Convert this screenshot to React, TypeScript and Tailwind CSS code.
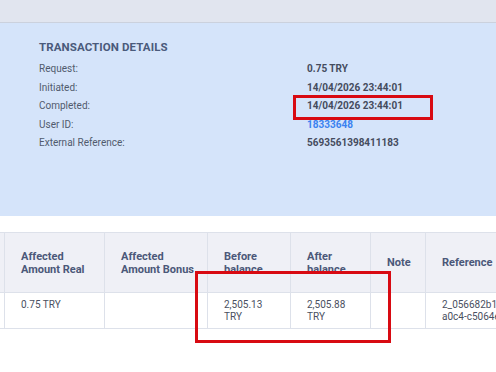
const details = [
  { label: "Request:", value: "0.75 TRY" },
  { label: "Initiated:", value: "14/04/2026 23:44:01" },
  { label: "Completed:", value: "14/04/2026 23:44:01" },
  { label: "User ID:", value: "18333648", link: true },
  { label: "External Reference:", value: "5693561398411183" },
];

const columns = [
  { w: "w-[5px] pl-0", head: [] as string[], cell: [] as string[] },
  { w: "w-[100px] pl-[16px]", head: ["Affected", "Amount Real"], cell: ["0.75 TRY"] },
  { w: "w-[103px] pl-[16px]", head: ["Affected", "Amount Bonus"], cell: [] },
  { w: "w-[83px] pl-[16px]", head: ["Before", "balance"], cell: ["2,505.13", "TRY"] },
  { w: "w-[80px] pl-[16px]", head: ["After", "balance"], cell: ["2,505.88", "TRY"] },
  { w: "w-[55px] pl-[16px]", head: ["Note"], cell: [] },
  { w: "w-[110px] pl-[16px]", head: ["Reference"], cell: ["2_056682b1-", "a0c4-c5064e"] },
];

export default function App() {
  return (
    <div className="relative w-[496px] h-[372px] overflow-hidden bg-white font-['Roboto',_'Liberation_Sans',_sans-serif]">
      <div className="h-[23px] bg-[#e1e5ef] border-b border-[#cbd1dd]" />

      <div className="h-[193px] bg-[#d5e4fa] pl-[39px] pt-[17px]">
        <h2 className="text-[11.5px] leading-[14px] font-bold text-[#4a5a7b] tracking-[0.1px]">
          TRANSACTION DETAILS
        </h2>
        <div className="mt-[6px] grid grid-cols-[268px_1fr]">
          {details.map((d) => (
            <div key={d.label} className="contents">
              <div className="h-[18.5px] leading-[18.5px] text-[10px] text-[#515b6d]">
                {d.label}
              </div>
              <div
                className={
                  d.link
                    ? "h-[18.5px] leading-[18.5px] text-[10px] font-bold text-[#3b82f0]"
                    : "h-[18.5px] leading-[18.5px] text-[10px] font-bold text-[#454c5e]"
                }
              >
                {d.value}
              </div>
            </div>
          ))}
        </div>
      </div>

      <div className="h-[16px]" />

      <div className="border-t border-[#dde1ea] w-max">
        <div className="flex bg-[#eff0f6] border-b border-[#dde1ea] h-[60px]">
          {columns.map((c, i) => (
            <div
              key={i}
              className={`${c.w} shrink-0 h-full border-r border-[#dde1ea] flex flex-col justify-center text-[11px] leading-[13px] font-bold text-[#4b5879]`}
            >
              {c.head.map((t) => (
                <span key={t} className="whitespace-nowrap">{t}</span>
              ))}
            </div>
          ))}
        </div>
        <div className="flex border-b border-[#dde1ea] h-[36px]">
          {columns.map((c, i) => (
            <div
              key={i}
              className={`${c.w} shrink-0 h-full border-r border-[#dde1ea] pt-[6px] flex flex-col text-[10px] leading-[11.5px] text-[#4a5061]`}
            >
              {c.cell.map((t) => (
                <span key={t} className="whitespace-nowrap">{t}</span>
              ))}
            </div>
          ))}
        </div>
      </div>

      <div className="absolute left-[293px] top-[95px] w-[140px] h-[25px] border-[3px] border-[#d80a12]" />
      <div className="absolute left-[195px] top-[271px] w-[196px] h-[72px] border-[3px] border-[#d80a12]" />
    </div>
  );
}
